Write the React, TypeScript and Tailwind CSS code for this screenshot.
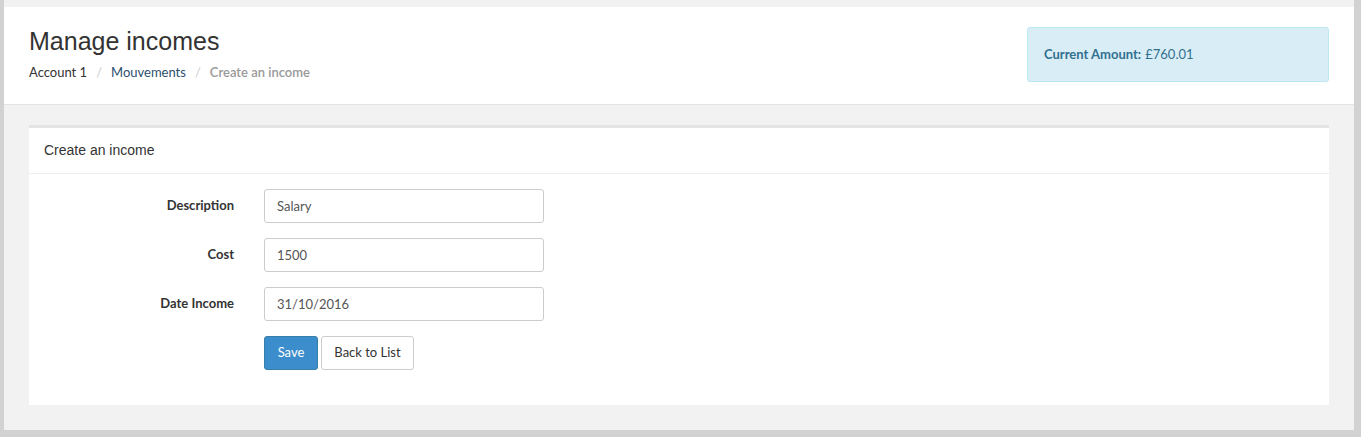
export default function App() {
  const body = "font-['Lato','Open_Sans',sans-serif]";
  const rows = [
    { label: "Description", value: "Salary" },
    { label: "Cost", value: "1500" },
    { label: "Date Income", value: "31/10/2016" },
  ];

  return (
    <div className="h-[437px] w-full bg-[#d2d2d2] pl-1 pr-[7px] pb-[7px]">
      <div className="flex h-full flex-col bg-[#f2f2f2] pt-[7px]">
        {/* Page header */}
        <div className="flex h-[98px] shrink-0 justify-between border-b border-[#e3e3e3] bg-white pl-[25px] pr-[25px]">
          <div className="pt-[20px]">
            <h1 className="font-['Liberation_Sans',Arial,sans-serif] text-[25px] leading-[28px] text-[#333]">
              Manage incomes
            </h1>
            <div className={`${body} mt-[8px] flex items-center text-[13px] leading-[18px]`}>
              <span className="text-[#333]">Account 1</span>
              <span className="px-[9px] text-[#ccc]">/</span>
              <span className="text-[#2c4f6e]">Mouvements</span>
              <span className="px-[9px] text-[#ccc]">/</span>
              <span className="font-semibold text-[#999]">Create an income</span>
            </div>
          </div>
          <div
            className={`${body} mt-[20px] flex h-[55px] w-[302px] items-center rounded-[3px] border border-[#bce8f1] bg-[#d9edf7] px-4 text-[13px] text-[#31708f]`}
          >
            <span className="font-bold">Current Amount:</span>
            <span className="ml-1">£760.01</span>
          </div>
        </div>

        {/* Form card */}
        <div className="px-[25px] pt-[20px]">
          <div className="border-t-[3px] border-[#e4e4e4] bg-white">
            <div className="flex h-[46px] items-center border-b border-[#eeeeee] px-[15px] font-['Liberation_Sans',Arial,sans-serif] text-[14px] text-[#333]">
              Create an income
            </div>
            <div className={`${body} flex flex-col gap-[15px] pb-[35px] pl-[15px] pt-[15px] text-[13px]`}>
              {rows.map((r) => (
                <div key={r.label} className="flex items-center gap-[30px]">
                  <label className="w-[190px] text-right font-bold text-[#333]">{r.label}</label>
                  <input
                    readOnly
                    value={r.value}
                    className="h-[34px] w-[280px] rounded-[3px] border border-[#cccccc] px-3 text-[13px] text-[#555] outline-none"
                  />
                </div>
              ))}
              <div className="flex gap-[3px] pl-[220px]">
                <button className="h-[34px] w-[54px] rounded-[3px] border border-[#367fa9] bg-[#3c8dcb] text-[13px] text-white">
                  Save
                </button>
                <button className="h-[34px] w-[93px] rounded-[3px] border border-[#cccccc] bg-white text-[13px] text-[#333]">
                  Back to List
                </button>
              </div>
            </div>
          </div>
        </div>
      </div>
    </div>
  );
}
